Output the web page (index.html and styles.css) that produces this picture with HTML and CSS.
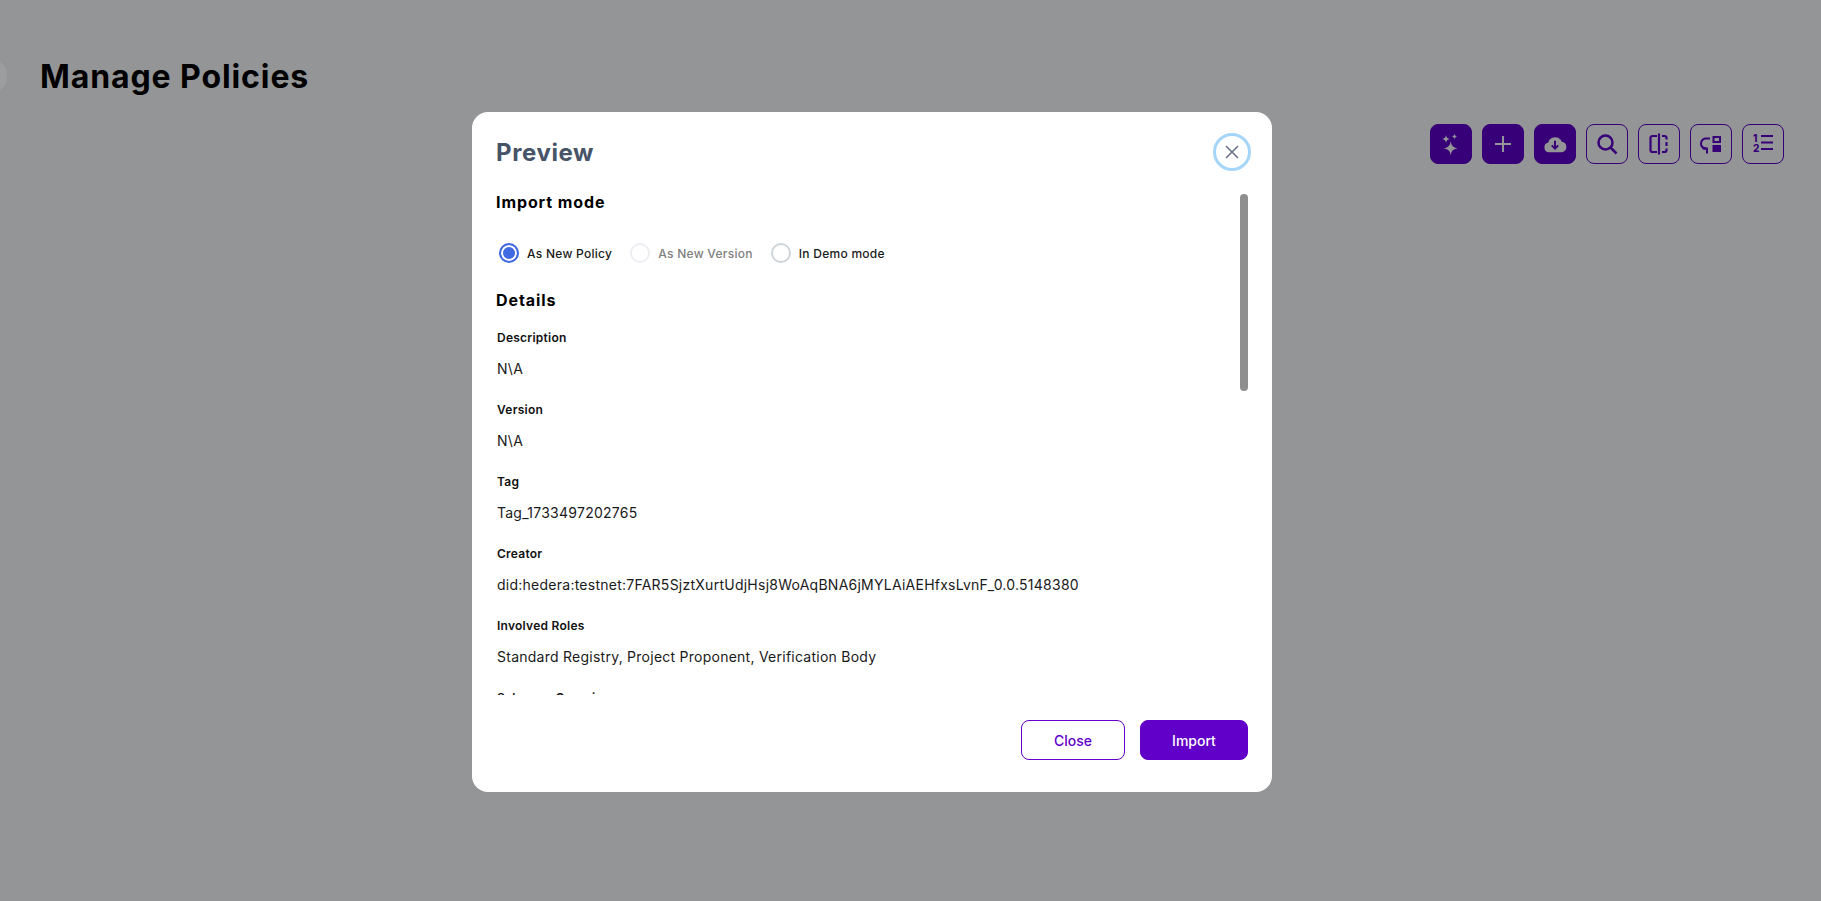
FILE: index.html
```html
<!DOCTYPE html>
<html lang="en">
<head>
  <meta charset="UTF-8">
  <title>Manage Policies</title>
  <link rel="stylesheet" href="styles.css">
</head>
<body>

  <div class="page">
    <span class="menu-toggle"></span>
    <h1>Manage Policies</h1>

    <div class="toolbar">
      <button class="tool filled">
        <svg viewBox="0 0 24 24" width="24" height="24" fill="currentColor">
          <path d="M11.700 9c.6 4.500 2.200 6.400 7 7.300-4.800.9-6.400 2.800-7 7.200-.6-4.400-2.200-6.300-7-7.200 4.800-.9 6.400-2.800 7-7.300z"/>
          <path d="M7 3c.3 2.500 1.300 3.600 4 4-2.700.4-3.700 1.500-4 4-.3-2.500-1.300-3.600-4-4 2.700-.4 3.700-1.500 4-4z"/>
          <path d="M15.500 1.500c.2 1.900.9 2.700 3 3-2.100.3-2.800 1.100-3 3-.2-1.900-.9-2.700-3-3 2.100-.3 2.800-1.100 3-3z"/>
        </svg>
      </button>
      <button class="tool filled">
        <svg viewBox="0 0 24 24" width="24" height="24" fill="none" stroke="currentColor" stroke-width="2">
          <path d="M12 4v16M4 12h16"/>
        </svg>
      </button>
      <button class="tool filled">
        <svg viewBox="0 0 24 24" width="26" height="26">
          <path fill="currentColor" d="M6.500 19.500a4.500 4.500 0 0 1-.7-8.900 6.500 6.500 0 0 1 12.400-.6 4.800 4.800 0 0 1 .3 9.500z"/>
          <path fill="none" stroke="#370078" stroke-width="1.800" d="M12 9v7M9 13.300l3 3 3-3"/>
        </svg>
      </button>
      <button class="tool">
        <svg viewBox="0 0 24 24" width="24" height="24" fill="none" stroke="currentColor" stroke-width="2.500">
          <circle cx="10.500" cy="10.500" r="7"/>
          <path d="M15.500 15.500l6 6"/>
        </svg>
      </button>
      <button class="tool">
        <svg viewBox="0 0 24 24" width="24" height="24" fill="none" stroke="currentColor" stroke-width="2.200">
          <path d="M12 1.500v21M10 4H5.500a2 2 0 0 0-2 2v12a2 2 0 0 0 2 2H10"/>
          <path d="M15 4h2.500a2 2 0 0 1 2 2v1.500M19.500 10v4M19.500 16.500V18a2 2 0 0 1-2 2H15"/>
        </svg>
      </button>
      <button class="tool">
        <svg viewBox="0 0 24 24" width="24" height="24" fill="none" stroke="currentColor" stroke-width="2">
          <rect x="14.500" y="5" width="6.500" height="5"/>
          <rect x="13.500" y="13" width="8.500" height="7" fill="currentColor" stroke="none"/>
          <path d="M11 6.500H7a5 5 0 0 0-2.500 9.300l3 1.200"/>
          <path d="M8 21.500v-5H3.500"/>
        </svg>
      </button>
      <button class="tool">
        <svg viewBox="0 0 24 24" width="24" height="24" fill="none" stroke="currentColor" stroke-width="1.800">
          <path d="M10 4h12M10 10.500h12M10 17h12"/>
          <text x="2" y="10" class="tool-num">1</text>
          <text x="2" y="20" class="tool-num">2</text>
        </svg>
      </button>
    </div>
  </div>

  <div class="overlay">
    <div class="dialog">
      <div class="dialog-header">
        <h2>Preview</h2>
        <button class="close-x">
          <svg viewBox="0 0 16 16" width="16" height="16" fill="none" stroke="currentColor" stroke-width="1.500">
            <path d="M2 2l12 12M14 2L2 14"/>
          </svg>
        </button>
      </div>

      <div class="dialog-body">
        <span class="scroll-thumb"></span>

        <h3>Import mode</h3>
        <div class="radios">
          <label class="radio checked"><i></i>As New Policy</label>
          <label class="radio disabled"><i></i>As New Version</label>
          <label class="radio"><i></i>In Demo mode</label>
        </div>

        <h3 class="details-title">Details</h3>
        <div class="field">
          <div class="field-label">Description</div>
          <div class="field-value">N\A</div>
        </div>
        <div class="field">
          <div class="field-label">Version</div>
          <div class="field-value">N\A</div>
        </div>
        <div class="field">
          <div class="field-label">Tag</div>
          <div class="field-value">Tag_1733497202765</div>
        </div>
        <div class="field">
          <div class="field-label">Creator</div>
          <div class="field-value">did:hedera:testnet:7FAR5SjztXurtUdjHsj8WoAqBNA6jMYLAiAEHfxsLvnF_0.0.5148380</div>
        </div>
        <div class="field">
          <div class="field-label">Involved Roles</div>
          <div class="field-value">Standard Registry, Project Proponent, Verification Body</div>
        </div>
        <div class="field">
          <div class="field-label">Schemas Overview</div>
          <div class="field-value">N\A</div>
        </div>
      </div>

      <div class="dialog-footer">
        <button class="btn btn-outline">Close</button>
        <button class="btn btn-primary">Import</button>
      </div>
    </div>
  </div>

</body>
</html>
```

FILE: styles.css
```css
html, body {
  height: 100%;
}

body {
  margin: 0;
  font-family: Inter, "Liberation Sans", sans-serif;
  background-color: #949596;
  overflow: hidden;
}

.page {
  height: 100%;
  box-sizing: border-box;
  padding: 53px 37px 0 40px;
}

.menu-toggle {
  position: absolute;
  left: -15px;
  top: 61px;
  width: 22px;
  height: 30px;
  border-radius: 50%;
  background-color: #9c9d9f;
}

h1 {
  margin: 0;
  font-size: 32px;
  font-weight: 700;
  letter-spacing: .9px;
  line-height: 48px;
  color: #000;
}

.toolbar {
  display: flex;
  justify-content: flex-end;
  gap: 10px;
  margin-top: 23px;
}

.tool {
  display: flex;
  align-items: center;
  justify-content: center;
  width: 42px;
  height: 40px;
  padding: 0;
  color: #370078;
  background: transparent;
  border: 1px solid #370078;
  border-radius: 8px;
}

.tool.filled {
  color: #949596;
  background-color: #370078;
}

.tool-num {
  font-family: Inter, sans-serif;
  font-size: 10px;
  font-weight: 800;
  fill: currentColor;
  stroke: none;
}

.overlay {
  position: fixed;
  top: 0;
  left: 0;
  right: 0;
  bottom: 0;
  padding: 112px 0 0 472px;
}

.dialog {
  position: relative;
  display: flex;
  flex-direction: column;
  width: 800px;
  height: 680px;
  background-color: #fff;
  border-radius: 16px;
}

.dialog-header {
  display: flex;
  align-items: center;
  justify-content: space-between;
  height: 78px;
  box-sizing: border-box;
  padding: 2px 21px 0 24px;
  flex-shrink: 0;
}

.dialog-header h2 {
  margin: 0;
  font-size: 24px;
  font-weight: 700;
  letter-spacing: .6px;
  color: #475467;
}

.close-x {
  display: flex;
  align-items: center;
  justify-content: center;
  width: 38px;
  height: 38px;
  padding: 0;
  color: #667085;
  background: #fff;
  border: 3px solid #a6d5fa;
  border-radius: 50%;
}

.dialog-body {
  position: relative;
  height: 505px;
  overflow: hidden;
  padding: 0 24px;
  flex-shrink: 0;
}

.scroll-thumb {
  position: absolute;
  top: 4px;
  right: 24px;
  width: 8px;
  height: 197px;
  border-radius: 4px;
  background-color: #8f8f8f;
}

.dialog-body h3 {
  margin: 0;
  font-size: 16px;
  font-weight: 700;
  letter-spacing: .9px;
  line-height: 24px;
  color: #000;
}

.radios {
  display: flex;
  gap: 18px;
  margin-top: 28px;
  padding-left: 3px;
}

.radio {
  display: flex;
  align-items: center;
  gap: 8px;
  height: 22px;
  font-size: 12px;
  font-weight: 500;
  letter-spacing: .27px;
  color: #1a1a1a;
}

.radio i {
  width: 16px;
  height: 16px;
  background-color: #fff;
  border: 2px solid #ced4da;
  border-radius: 50%;
}

.radio.checked i {
  border-color: #4169e1;
  background-color: #4169e1;
  box-shadow: inset 0 0 0 2px #fff;
}

.radio.disabled {
  color: #808080;
}

.radio.disabled i {
  border-color: #eceef1;
}

.dialog-body .details-title {
  margin-top: 24px;
}

.field {
  height: 72px;
  padding-left: 1px;
}

.details-title + .field {
  margin-top: 17px;
}

.field-label {
  font-size: 12px;
  font-weight: 600;
  letter-spacing: .25px;
  line-height: 18px;
  color: #111;
}

.field-value {
  margin-top: 12px;
  font-size: 14px;
  letter-spacing: .25px;
  line-height: 20px;
  color: #1a1a1a;
}

.dialog-footer {
  display: flex;
  justify-content: flex-end;
  gap: 15px;
  padding: 25px 24px 0;
}

.btn {
  height: 40px;
  font-family: Inter, sans-serif;
  font-size: 14px;
  font-weight: 500;
  border-radius: 8px;
  border: 1px solid #6100c8;
}

.btn-outline {
  width: 104px;
  color: #6100c8;
  background-color: #fff;
}

.btn-primary {
  width: 108px;
  color: #fff;
  background-color: #6100c8;
}
```
